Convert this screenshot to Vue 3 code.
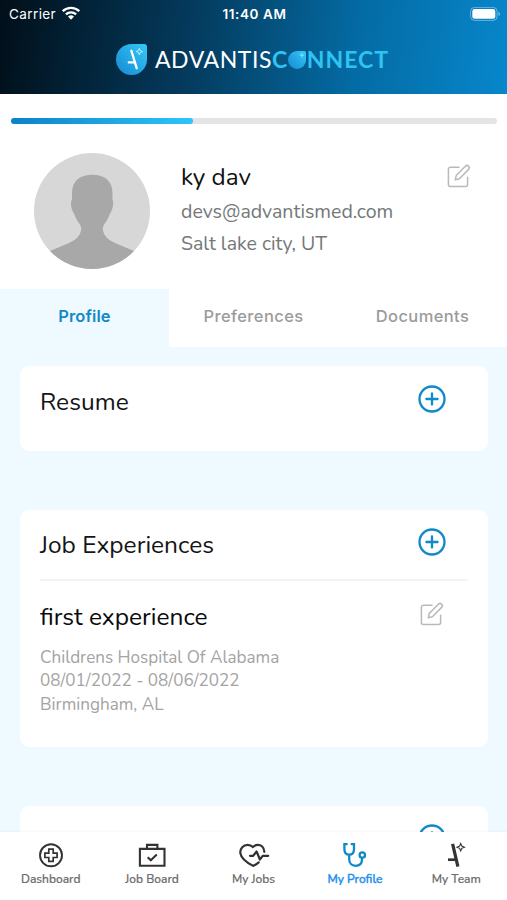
<script setup>
const tabs = ['Profile', 'Preferences', 'Documents']
const progress = 37.5
</script>

<template>
  <div class="screen">
    <svg class="defs" width="0" height="0">
      <defs>
        <symbol id="edit" viewBox="0 0 24 24">
          <path d="M12 3.200H3.400a2 2 0 0 0-2 2v15.200a2 2 0 0 0 2 2h15.200a2 2 0 0 0 2-2v-7.200M8.200 15.800l1-4.200 9.200-9.400a2.200 2.200 0 0 1 3.200 3.200l-9.200 9.400z" fill="none" stroke="#b9b9b9" stroke-width="1.500" stroke-linecap="round" stroke-linejoin="round" />
        </symbol>
        <symbol id="add" viewBox="0 0 28 28">
          <g fill="none" stroke="#1089ca" stroke-width="2.300" stroke-linecap="round">
            <circle cx="14" cy="14" r="12.500" />
            <path d="M14 8.400v11.200M8.400 14h11.200" />
          </g>
        </symbol>
        <linearGradient id="drop" x1="1" y1="0" x2="0" y2="1">
          <stop offset="0" stop-color="#35c9f8" />
          <stop offset="1" stop-color="#1489d2" />
        </linearGradient>
      </defs>
    </svg>

    <header class="header">
      <div class="status">
        <div class="carrier">
          <span>Carrier</span>
          <svg width="18" height="14" viewBox="0 0 18 14">
            <g fill="none" stroke="#fff" stroke-width="2.300">
              <path d="M.8 5.200a11.700 11.700 0 0 1 16.400 0" />
              <path d="M3.900 8.400a7.300 7.300 0 0 1 10.200 0" />
            </g>
            <path d="M6 10.600a4.400 4.400 0 0 1 6 0l-3 3.100z" fill="#fff" />
          </svg>
        </div>
        <span class="time">11:40 AM</span>
        <svg class="battery" width="31" height="15" viewBox="0 0 31 15">
          <rect x=".6" y=".4" width="26.500" height="13" rx="4" fill="none" stroke="#fff" stroke-opacity=".4" />
          <rect x="2.300" y="2.100" width="23" height="9.600" rx="2.300" fill="#fff" />
          <path d="M28.500 4.700q1.600.8 1.600 2.200t-1.600 2.200z" fill="#fff" fill-opacity=".45" />
        </svg>
      </div>
      <div class="brand">
        <svg width="31" height="31" viewBox="0 0 31 31">
          <path d="M15.500 0H28a3 3 0 0 1 3 3v12.500A15.500 15.500 0 1 1 15.500 0z" fill="url(#drop)" />
          <path d="M15.400 6.800L20.700 24.200M12.800 18.400h5.600" fill="none" stroke="#fff" stroke-width="2.300" stroke-linecap="round" />
          <path d="M23.300 4.400l.9 2.300 2.300.9-2.300.9-.9 2.300-.9-2.300-2.300-.9 2.300-.9z" fill="none" stroke="#c8f3ff" stroke-width=".9" />
        </svg>
        <div class="wordmark">
          <span class="word">ADVANTIS</span><span class="connect">C</span>
          <svg width="18" height="18" viewBox="0 0 18 18">
            <path d="M9 0h7.400A1.600 1.600 0 0 1 18 1.600V9a9 9 0 1 1-9-9z" fill="url(#drop)" />
            <path d="M13.800 2v4.400M11.600 4.200H16" stroke="#8be6ff" stroke-width=".9" />
          </svg>
          <span class="connect rest">NNECT</span>
        </div>
      </div>
    </header>

    <section class="summary">
      <div class="track"><div class="bar" :style="{ width: progress + '%' }"></div></div>
      <div class="person">
        <svg class="avatar" width="116" height="116" viewBox="0 0 116 116">
          <clipPath id="round"><circle cx="58" cy="58" r="58" /></clipPath>
          <g clip-path="url(#round)">
            <rect width="116" height="116" fill="#d7d7d7" />
            <path d="M58.200 21.800C46 21.800 38 28 38 40v7c-2 1-1 10 2 13.500 1 3.500 3.500 7.500 6.500 12 .8 1.500.8 4 .3 6-1.800 6-6.300 9-11.300 11.200l-19.500 8.300-6 4v18h96v-18l-6-4-19.500-8.300c-5-2.200-9.500-5.200-11.300-11.200-.5-2-.5-4.500.3-6 3-4.500 5.500-8.500 6.500-12 3-3.500 4-12.500 2.500-13.500v-7c0-12-8-18.200-20.300-18.200z" fill="#a8a8a8" />
          </g>
        </svg>
        <div class="details">
          <h1>ky dav</h1>
          <p class="email">devs@advantismed.com</p>
          <p class="place">Salt lake city, UT</p>
        </div>
        <svg class="edit" width="24" height="24"><use href="#edit" /></svg>
      </div>
    </section>

    <nav class="tabs">
      <div v-for="(tab, i) in tabs" :key="tab" class="tab" :class="{ active: i === 0 }">{{ tab }}</div>
    </nav>

    <main class="content">
      <section class="card resume">
        <div class="head"><h2>Resume</h2><svg width="28" height="28"><use href="#add" /></svg></div>
      </section>
      <section class="card jobs">
        <div class="head"><h2>Job Experiences</h2><svg width="28" height="28"><use href="#add" /></svg></div>
        <div class="entry">
          <div class="entry-head"><h3>first experience</h3><svg width="24" height="24"><use href="#edit" /></svg></div>
          <p>Childrens Hospital Of Alabama</p>
          <p>08/01/2022 - 08/06/2022</p>
          <p>Birmingham, AL</p>
        </div>
      </section>
      <section class="card next">
        <div class="head"><span></span><svg width="28" height="28"><use href="#add" /></svg></div>
      </section>
    </main>

    <nav class="bottom">
      <div class="item">
        <svg width="40" height="26" viewBox="0 0 40 26" fill="none" stroke="#333" stroke-width="1.900">
          <circle cx="20" cy="13.300" r="11" />
          <path d="M17.800 7.200h4.400v3.900h3.900v4.400h-3.900v3.900h-4.400v-3.900h-3.900v-4.400h3.900z" stroke-width="1.700" />
        </svg>
        <span>Dashboard</span>
      </div>
      <div class="item">
        <svg width="40" height="26" viewBox="0 0 40 26" fill="none" stroke="#333" stroke-width="2.100">
          <path d="M7.900 6.900h24.600v16.800h-24.600zM15 6.900v-4h10.400v4M15.700 15.300l3.100 3 6-5.800" />
        </svg>
        <span>Job Board</span>
      </div>
      <div class="item">
        <svg width="40" height="26" viewBox="0 0 40 26" fill="none" stroke="#333" stroke-width="2.200" stroke-linejoin="round" stroke-linecap="round">
          <path d="M31.300 9.800c-.2-4.500-3.200-7-6.700-7-2.200 0-3.500.9-4.700 2.300-1.300-1.400-3-2.300-5.200-2.300-4.200 0-8 3.500-7.300 8.500.8 5.500 7.300 9.700 12.700 12.600 2-1 4-2.300 5.600-3.600M17 13.800h3.200l3.400-4.300 3.300 8 2.800-3.700h5.500" />
        </svg>
        <span>My Jobs</span>
      </div>
      <div class="item selected">
        <svg width="40" height="26" viewBox="0 0 40 26" fill="none" stroke="#1089ca" stroke-width="2.300" stroke-linecap="round">
          <path d="M11.700 2.200h-2.300v5c0 3.500 2 5.400 4.800 5.400s4.800-1.900 4.800-5.400v-5h-2.300M14.200 12.600v4.700c0 4 2.600 6.500 6.300 6.500 4 0 6.500-2.500 6.500-6.500v-1" />
          <circle cx="27.300" cy="13" r="2.700" />
        </svg>
        <span>My Profile</span>
      </div>
      <div class="item">
        <svg width="40" height="26" viewBox="0 0 40 26" fill="none" stroke="#333">
          <path d="M16.600 1.800L21.900 24.600" stroke-width="3.200" />
          <path d="M12 17.700h8" stroke-width="2.700" />
          <path d="M24.700 1.500l1.100 2.600 2.600 1.100-2.600 1.100-1.100 2.600-1.100-2.600-2.600-1.100 2.600-1.100z" stroke-width="1.100" />
        </svg>
        <span>My Team</span>
      </div>
    </nav>
  </div>
</template>

<style>
body { overflow: hidden; }
</style>

<style scoped>
* { box-sizing: border-box; }
.screen { width: 507px; height: 900px; display: flex; flex-direction: column; overflow: hidden; background: #fff; font-family: Nunito, Lato, sans-serif; color: #151515; }
.defs { position: absolute; }
svg { display: block; flex: none; }
h1, h2, h3, p { margin: 0; font-weight: 400; white-space: nowrap; }
.header { height: 94px; flex: none; background: linear-gradient(97deg, #010f19 0%, #043b5e 38%, #046ba4 70%, #0787cc 100%); color: #fff; }
.status { height: 28px; padding: 0 6px 0 9px; display: grid; grid-template-columns: 1fr auto 1fr; align-items: center; font: 400 13.500px Inter, sans-serif; }
.carrier { display: flex; align-items: center; gap: 6px; letter-spacing: .4px; }
.carrier svg { margin-top: -2px; }
.time { font-weight: 600; font-size: 13.500px; letter-spacing: .6px; margin-right: 1px; }
.battery { justify-self: end; }
.brand { display: flex; align-items: center; padding: 16px 0 0 116px; gap: 8px; }
.wordmark { display: flex; align-items: center; font: 400 23px/31px Lato, sans-serif; letter-spacing: .55px; white-space: nowrap; }
.connect { font-weight: 700; color: #2dc4f3; }
.rest { margin-left: 1px; letter-spacing: 1px; }
.summary { height: 195px; flex: none; padding: 24px 10px 0 11px; }
.track { height: 6px; border-radius: 3px; background: #e4e4e4; }
.bar { height: 6px; border-radius: 3px; background: linear-gradient(90deg, #0b82ca, #2dc4fb); }
.person { display: flex; padding: 29px 26px 0 23px; }
.details { flex: 1; padding: 7px 0 0 31px; }
h1 { font-size: 24.300px; line-height: 34px; margin-bottom: 2px; color: #111; }
.email, .place { font-size: 19.550px; line-height: 32px; color: #737879; }
.edit { margin-top: 11px; }
.tabs { height: 58px; flex: none; display: grid; grid-template-columns: repeat(3, 1fr); }
.tab { display: flex; align-items: center; justify-content: center; padding-bottom: 4px; font: 500 16.500px Inter, sans-serif; letter-spacing: .4px; color: #9b9b9b; }
.tab.active { background: #eefaff; color: #1489c8; font-weight: 600; letter-spacing: .1px; }
.content { flex: 1; min-height: 0; overflow: hidden; background: #eefaff; padding: 19px 19px 0 20px; }
.card { background: #fff; border-radius: 9px; padding: 0 20px; }
.resume { height: 85px; margin-bottom: 59px; }
.jobs { height: 237px; margin-bottom: 59px; }
.next { height: 85px; }
.head { display: flex; justify-content: space-between; padding: 18px 22px 0 0; height: 69px; }
.resume .head { padding-top: 19px; }
h2, h3 { font-size: 24.500px; line-height: 34px; }
.entry { border-top: 2px solid #f3f3f4; }
.entry-head { display: flex; justify-content: space-between; padding: 19px 24px 0 0; height: 65px; }
.entry-head svg { margin-top: 2px; }
h3 { color: #0a0a0a; }
.entry p { font-size: 17.100px; line-height: 23.300px; color: #a3a3a3; }
.bottom { height: 68px; flex: none; display: grid; grid-template-columns: repeat(5, 1fr); background: #fff; padding-top: 10px; box-shadow: 0 -1px 2px rgba(0, 0, 0, .04); z-index: 1; }
.item { display: flex; flex-direction: column; align-items: center; font-size: 12px; font-weight: 500; line-height: 18px; gap: 2px; color: #6b6b6b; -webkit-text-stroke: .2px currentColor; }
.selected { color: #238eed; -webkit-text-stroke-width: .4px; }
</style>
